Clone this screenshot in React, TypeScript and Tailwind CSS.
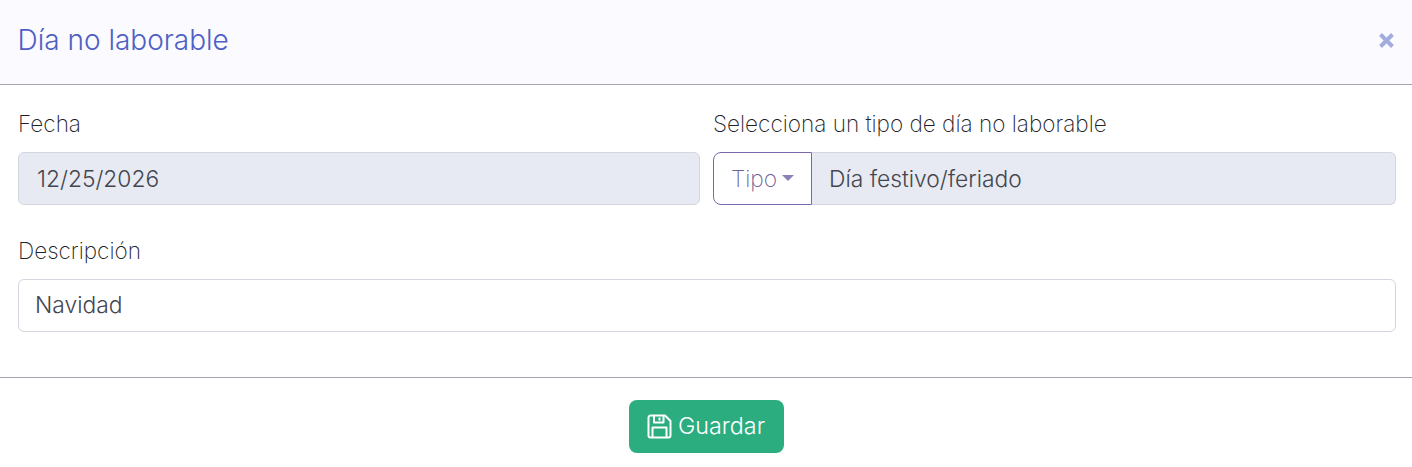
function SaveIcon() {
  return (
    <svg width="25" height="25" viewBox="0 0 25 25" fill="none" stroke="currentColor" strokeWidth="2" strokeLinejoin="round">
      <path d="M3.5 1.5H18L23.5 7V21.5A2 2 0 0 1 21.5 23.5H3.5A2 2 0 0 1 1.5 21.5V3.5A2 2 0 0 1 3.5 1.5Z" />
      <path d="M7 1.5V8.5H16.5V1.5" />
      <path d="M12.5 3.5V6.5" />
      <path d="M5.5 23.5V13.5H19.5V23.5" />
    </svg>
  )
}

export default function App() {
  return (
    <div className="w-[1412px] h-[467px] bg-white overflow-hidden font-['Inter',sans-serif] font-light text-[#3f4254]">
      <div className="h-[85px] bg-[#fbfbff] border-b border-[#a5a5ad] pl-[17.5px] pr-[17px] pb-[4px] flex items-center justify-between">
        <h1 className="text-[28px] font-light text-[#4e60c4] leading-none">Día no laborable</h1>
        <svg width="17" height="17" viewBox="0 0 17 17" className="text-[#a3acdf]" stroke="currentColor" strokeWidth="4">
          <path d="M2.5 2.5L14.5 14.5M14.5 2.5L2.5 14.5" />
        </svg>
      </div>

      <div className="h-[293px] border-b border-[#a5a5ad] pl-[18px] pr-[16px] pt-[25px]">
        <div className="grid grid-cols-[682px_1fr] gap-x-[13px]">
          <div>
            <label className="block text-[22.55px] leading-[28px] font-extralight text-[#222226]">Fecha</label>
            <div className="mt-[14px] h-[53px] rounded-[6px] border border-[#d3d6de] bg-[#e7eaf2] pl-[18px] pt-px flex items-center text-[22.8px] text-[#44464f]">
              12/25/2026
            </div>
          </div>
          <div>
            <label className="block text-[22.55px] leading-[28px] font-extralight text-[#222226]">Selecciona un tipo de día no laborable</label>
            <div className="mt-[14px] h-[53px] flex">
              <button className="w-[99px] rounded-l-[8px] border border-[#7b68ab] bg-white pt-px flex items-center justify-center gap-[5px] text-[22.8px] font-extralight text-[#6f6299]">
                Tipo
                <span className="w-0 h-0 border-x-[6px] border-x-transparent border-t-[6px] border-t-[#8d7fb8] mb-[3px]" />
              </button>
              <div className="flex-1 rounded-r-[6px] border border-l-0 border-[#d3d6de] bg-[#e7eaf2] pl-[17px] pt-px flex items-center text-[22.8px] text-[#44464f]">
                Día festivo/feriado
              </div>
            </div>
          </div>
        </div>
        <div className="mt-[32px]">
          <label className="block text-[22.55px] leading-[28px] font-extralight text-[#222226]">Descripción</label>
          <div className="mt-[14px] h-[53px] rounded-[6px] border border-[#d3d6de] bg-white pl-[16px] flex items-center text-[22.8px] text-[#44464f]">
            Navidad
          </div>
        </div>
      </div>

      <div className="flex justify-center pt-[22px]">
        <button className="w-[155px] h-[53px] rounded-[8px] bg-[#2bad80] text-white text-[23.3px] font-light flex items-center justify-center gap-[6px]">
          <SaveIcon />
          Guardar
        </button>
      </div>
    </div>
  )
}
